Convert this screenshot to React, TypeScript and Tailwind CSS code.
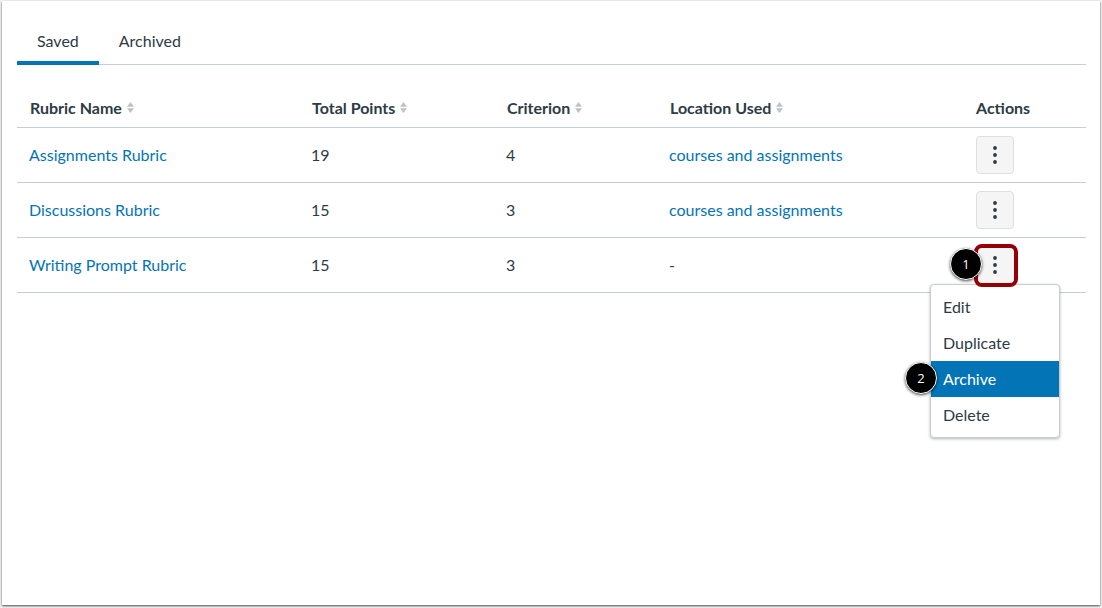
import { useState } from 'react'

const rubrics = [
  { name: 'Assignments Rubric', points: 19, criteria: 4, used: true },
  { name: 'Discussions Rubric', points: 15, criteria: 3, used: true },
  { name: 'Writing Prompt Rubric', points: 15, criteria: 3, used: false },
]

const columns = ['Rubric Name', 'Total Points', 'Criterion', 'Location Used']

const menuItems = ['Edit', 'Duplicate', 'Archive', 'Delete']

function SortIcon() {
  return (
    <svg width="7" height="11" viewBox="0 0 7 11" fill="#bcc2c6" aria-hidden="true">
      <path d="M3.5 0 7 4.8H0Z" />
      <path d="M3.5 11 0 6.2h7Z" />
    </svg>
  )
}

function MoreIcon() {
  return (
    <svg width="4" height="18" viewBox="0 0 4 18" fill="#2d3b45" aria-hidden="true">
      <circle cx="2" cy="2" r="1.9" />
      <circle cx="2" cy="9" r="1.9" />
      <circle cx="2" cy="16" r="1.9" />
    </svg>
  )
}

function Step({ n, className }: { n: number; className: string }) {
  return (
    <span
      className={`absolute flex size-8 items-center justify-center rounded-full border border-white bg-black font-['Open_Sans',sans-serif] text-[13px] leading-4 text-white shadow-[0_1px_3px_rgba(0,0,0,0.7)] ${className}`}
    >
      {n}
    </span>
  )
}

function ActionsMenu({ active, onSelect }: { active: string; onSelect: (item: string) => void }) {
  return (
    <div
      role="menu"
      className="absolute top-full left-1/2 w-[130px] -translate-x-1/2 rounded-sm border border-[#c7cdd1] bg-white py-1 shadow-[0_1px_3px_rgba(0,0,0,0.3)]"
    >
      {menuItems.map((item) => (
        <button
          key={item}
          role="menuitem"
          onClick={() => onSelect(item)}
          className={`block h-9 w-full px-3 text-left ${item === active ? 'bg-[#0374b5] text-white' : ''}`}
        >
          {item}
        </button>
      ))}
    </div>
  )
}

export default function App() {
  const [tab, setTab] = useState('Saved')
  const [openRow, setOpenRow] = useState(2)
  const [active, setActive] = useState('Archive')

  return (
    <div className="min-h-screen bg-[#f4f4f4] px-0.5 pt-px pb-[3px] font-['Lato',sans-serif] text-base leading-6 text-[#2d3b45]">
      <main className="min-h-[calc(100vh-4px)] bg-white pt-4 pr-3.5 pl-[15px] shadow-[0_1px_2px_rgba(0,0,0,0.7)]">
        <div role="tablist" className="flex border-b border-[#c7cdd1]">
          {['Saved', 'Archived'].map((t) => (
            <button
              key={t}
              role="tab"
              aria-selected={t === tab}
              onClick={() => setTab(t)}
              className={`-mb-px h-12 border-b-4 px-5 pt-1 ${t === tab ? 'border-[#0374b5]' : 'border-transparent'}`}
            >
              {t}
            </button>
          ))}
        </div>

        <table className="mt-6 w-full table-fixed border-collapse text-left">
          <colgroup>
            <col className="w-[282px]" />
            <col className="w-[195px]" />
            <col className="w-[163px]" />
            <col />
            <col className="w-[122px]" />
          </colgroup>
          <thead>
            <tr className="h-[38px] border-b border-[#c7cdd1]">
              {columns.map((c) => (
                <th key={c} className="px-[13px] font-bold">
                  <button className="flex items-center gap-[5px]">
                    {c}
                    <SortIcon />
                  </button>
                </th>
              ))}
              <th className="px-3 font-bold">Actions</th>
            </tr>
          </thead>
          <tbody>
            {rubrics.map((r, i) => (
              <tr key={r.name} className="h-[55px] border-b border-[#c7cdd1]">
                <td className="px-3">
                  <a href="#" className="text-[#0374b5]">{r.name}</a>
                </td>
                <td className="px-3">{r.points}</td>
                <td className="px-3">{r.criteria}</td>
                <td className="px-3">
                  {r.used ? <a href="#" className="text-[#0374b5]">courses and assignments</a> : '-'}
                </td>
                <td className="px-3">
                  <div className="relative size-[38px]">
                    <button
                      aria-label={`Actions for ${r.name}`}
                      onClick={() => setOpenRow(openRow === i ? -1 : i)}
                      className={`flex size-full items-center justify-center rounded-sm border bg-[#f5f5f5] ${openRow === i ? 'border-transparent' : 'border-[#dddfe0]'}`}
                    >
                      <MoreIcon />
                    </button>
                    {openRow === i && (
                      <>
                        <ActionsMenu active={active} onSelect={setActive} />
                        <span className="pointer-events-none absolute -top-0.5 -left-0.5 h-[43px] w-11 rounded-lg border-4 border-[#950006]" />
                        <Step n={1} className="top-0.5 -left-[26px]" />
                        <Step n={2} className="top-[116px] -left-[71px]" />
                      </>
                    )}
                  </div>
                </td>
              </tr>
            ))}
          </tbody>
        </table>
      </main>
    </div>
  )
}
